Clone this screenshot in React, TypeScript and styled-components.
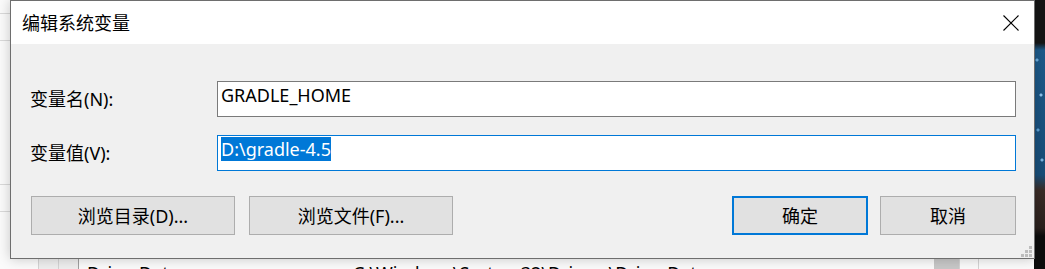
import * as React from "react";
import styled, { createGlobalStyle } from "styled-components";

const GlobalStyle = createGlobalStyle`
  html, body {
    margin: 0;
    padding: 0;
    background: #fbfbfb;
    overflow: hidden;
  }
`;

const UI_FONT = `"Noto Sans", "Noto Sans CJK SC", sans-serif`;

// the desktop: a list window behind, wallpaper on the right, the dialog on top
const Desktop = styled.div`
  position: relative;
  display: flex;
  width: 1045px;
  height: 269px;
  overflow: hidden;
  font-family: ${UI_FONT};
  font-size: 18px;
  color: #000;
`;

const BackWindow = styled.div`
  display: flex;
  flex-direction: column;
  width: 1034px;
  background: #fbfbfb;
`;

const ListLine = styled.div<{ $h: number }>`
  height: ${(p) => p.$h}px;
  border-bottom: 1px solid #dadada;
  flex-shrink: 0;
`;

const Filler = styled.div`
  height: 46px;
  flex-shrink: 0;
`;

const FileRow = styled.div`
  display: flex;
  height: 30px;
  line-height: 24px;
  white-space: nowrap;
`;

const GutterCell = styled.div<{ $w: number; $bg: string; $line: string }>`
  width: ${(p) => p.$w}px;
  background: ${(p) => p.$bg};
  border-right: 1px solid ${(p) => p.$line};
  flex-shrink: 0;
`;

const TextCell = styled.div<{ $w?: number }>`
  ${(p) => (p.$w ? `width: ${p.$w}px;` : "flex: 1;")}
  padding: 3px 0 0 8px;
  flex-shrink: 0;
  overflow: hidden;
`;

const Wallpaper = styled.div`
  flex: 1;
  background:
    radial-gradient(circle at 3px 60px, #6fb0e0 0 1px, transparent 2px),
    radial-gradient(circle at 7px 95px, #8cc4ee 0 1px, transparent 2px),
    radial-gradient(circle at 4px 130px, #5fa3d6 0 1px, transparent 2px),
    radial-gradient(circle at 8px 160px, #7ab6e4 0 1px, transparent 2px),
    linear-gradient(
      to bottom,
      #161616 0,
      #161616 43px,
      #1d5a8a 50px,
      #184d78 175px,
      #3b2c27 190px,
      #2a201d 228px,
      #0c0c0c 236px
    );
`;

const Dialog = styled.div`
  position: absolute;
  left: 10px;
  top: 0;
  width: 1025px;
  height: 259px;
  box-sizing: border-box;
  border: 1px solid #6e6e6e;
  background: #f0f0f0;
  box-shadow: 0 0 12px rgba(0, 0, 0, 0.22);
  display: flex;
  flex-direction: column;
`;

const TitleBar = styled.div`
  display: flex;
  align-items: center;
  height: 43px;
  background: #fff;
  flex-shrink: 0;
`;

const Title = styled.div`
  flex: 1;
  padding-left: 11px;
  line-height: 24px;
`;

const CloseButton = styled.div`
  width: 47px;
  height: 43px;
  display: flex;
  align-items: center;
  justify-content: center;
`;

const Body = styled.div`
  position: relative;
  flex: 1;
  display: flex;
  flex-direction: column;
  padding: 37px 18px 0 19px;
`;

const FieldRow = styled.div`
  display: flex;
  align-items: center;
  margin-bottom: 18px;
`;

const Label = styled.div`
  width: 187px;
  line-height: 24px;
  flex-shrink: 0;
`;

const TextBox = styled.div<{ $focused?: boolean }>`
  flex: 1;
  height: 36px;
  box-sizing: border-box;
  border: 1px solid ${(p) => (p.$focused ? "#0078d7" : "#7a7a7a")};
  background: #fff;
  padding: 1px 3px;
  line-height: 24px;
  white-space: nowrap;
`;

const Selected = styled.span`
  background: #0078d7;
  color: #fff;
`;

const ButtonRow = styled.div`
  display: flex;
  margin-top: 7px;
  padding-left: 1px;
`;

const ButtonGroup = styled.div<{ $gap: number }>`
  display: flex;
  gap: ${(p) => p.$gap}px;
`;

const Spacer = styled.div`
  flex: 1;
`;

const Button = styled.div<{ $w: number; $default?: boolean }>`
  width: ${(p) => p.$w}px;
  height: 39px;
  box-sizing: border-box;
  background: #e1e1e1;
  border: ${(p) => (p.$default ? "2px solid #0078d7" : "1px solid #adadad")};
  display: flex;
  align-items: center;
  justify-content: center;
  line-height: 24px;
`;

const Grip = styled.svg`
  position: absolute;
  right: 2px;
  bottom: 1px;
`;

const CloseIcon = () => (
  <svg width="16" height="16" viewBox="0 0 16 16">
    <path d="M0.5 0.5 L15.5 15.5 M15.5 0.5 L0.5 15.5" stroke="#000" strokeWidth="1.1" fill="none" />
  </svg>
);

const gripDots: [number, number][] = [
  [8, 0],
  [4, 4],
  [8, 4],
  [0, 8],
  [4, 8],
  [8, 8],
];

export default function App() {
  return (
    <>
      <GlobalStyle />
      <Desktop>
        <BackWindow>
          <ListLine $h={13} />
          <ListLine $h={26} />
          <ListLine $h={143} />
          <ListLine $h={26} />
          <Filler />
          <FileRow>
            <GutterCell $w={38} $bg="#fbfbfb" $line="#d4d4d4" />
            <GutterCell $w={19} $bg="#efefef" $line="#d4d4d4" />
            <GutterCell $w={19} $bg="#efefef" $line="#a0a0a0" />
            <TextCell $w={258}>DriverData</TextCell>
            <TextCell $w={581}>C:\Windows\System32\Drivers\DriverData</TextCell>
            <GutterCell $w={25} $bg="#c8c8c8" $line="#d4d4d4" />
            <GutterCell $w={18} $bg="#fbfbfb" $line="#d4d4d4" />
          </FileRow>
        </BackWindow>
        <Wallpaper />
        <Dialog>
          <TitleBar>
            <Title>编辑系统变量</Title>
            <CloseButton>
              <CloseIcon />
            </CloseButton>
          </TitleBar>
          <Body>
            <FieldRow>
              <Label>变量名(N):</Label>
              <TextBox>GRADLE_HOME</TextBox>
            </FieldRow>
            <FieldRow>
              <Label>变量值(V):</Label>
              <TextBox $focused>
                <Selected>D:\gradle-4.5</Selected>
              </TextBox>
            </FieldRow>
            <ButtonRow>
              <ButtonGroup $gap={14}>
                <Button $w={204}>浏览目录(D)...</Button>
                <Button $w={204}>浏览文件(F)...</Button>
              </ButtonGroup>
              <Spacer />
              <ButtonGroup $gap={12}>
                <Button $w={136} $default>确定</Button>
                <Button $w={136}>取消</Button>
              </ButtonGroup>
            </ButtonRow>
            <Grip width="11" height="11" viewBox="0 0 11 11">
              {gripDots.map(([x, y]) => (
                <rect key={`${x}-${y}`} x={x} y={y} width="3" height="3" fill="#bdbdbd" />
              ))}
            </Grip>
          </Body>
        </Dialog>
      </Desktop>
    </>
  );
}
